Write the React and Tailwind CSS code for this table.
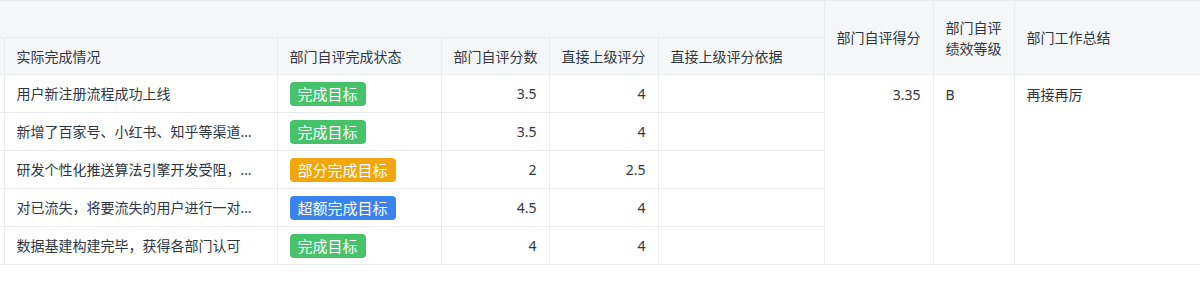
const rows = [
  { text: "用户新注册流程成功上线", status: "完成目标", tone: "green", self: "3.5", boss: "4" },
  { text: "新增了百家号、小红书、知乎等渠道的内容运营与用户引流工作", status: "完成目标", tone: "green", self: "3.5", boss: "4" },
  { text: "研发个性化推送算法引擎开发受阻，预计下季度继续推进", status: "部分完成目标", tone: "orange", self: "2", boss: "2.5" },
  { text: "对已流失，将要流失的用户进行一对一回访与召回", status: "超额完成目标", tone: "blue", self: "4.5", boss: "4" },
  { text: "数据基建构建完毕，获得各部门认可", status: "完成目标", tone: "green", self: "4", boss: "4" },
];

const toneClass = {
  green: "bg-[#46c26b]",
  orange: "bg-[#f0a60c]",
  blue: "bg-[#3a82ee]",
};

const Badge = ({ tone, children }) => (
  <span className={`inline-block align-middle h-6 px-2 rounded text-[15px] leading-6 text-white ${toneClass[tone]}`}>
    {children}
  </span>
);

const th = "border border-[#e9ebee] bg-[#f5f6f8] px-3 text-left font-normal align-middle";
const td = "border border-[#e9ebee] px-3 align-middle";

export default function App() {
  return (
    <div
      className="w-[1200px] h-[285px] overflow-hidden bg-white text-[14px] text-[#2f3641]"
      style={{ fontFamily: '"Noto Sans", "Noto Sans CJK SC", sans-serif' }}
    >
      <table className="table-fixed border-collapse w-[1314px] border-t border-[#e9ebee]">
        <colgroup>
          <col className="w-[4px]" />
          <col className="w-[273px]" />
          <col className="w-[164px]" />
          <col className="w-[108px]" />
          <col className="w-[109px]" />
          <col className="w-[166px]" />
          <col className="w-[109px]" />
          <col className="w-[81px]" />
          <col className="w-[300px]" />
        </colgroup>
        <thead>
          <tr className="h-[37px]">
            <th colSpan={6} className="border border-[#e9ebee] border-l-0 bg-[#f5f6f8]"></th>
            <th rowSpan={2} className={`${th} whitespace-nowrap`}>部门自评得分</th>
            <th rowSpan={2} className={`${th} leading-[21px]`}>部门自评绩效等级</th>
            <th rowSpan={2} className={`${th} whitespace-nowrap`}>部门工作总结</th>
          </tr>
          <tr className="h-[37px]">
            <th className="border border-[#e9ebee] border-l-0 bg-[#f5f6f8] p-0"></th>
            <th className={`${th} whitespace-nowrap`}>实际完成情况</th>
            <th className={`${th} whitespace-nowrap`}>部门自评完成状态</th>
            <th className={`${th} whitespace-nowrap`}>部门自评分数</th>
            <th className={`${th} whitespace-nowrap`}>直接上级评分</th>
            <th className={`${th} whitespace-nowrap`}>直接上级评分依据</th>
          </tr>
        </thead>
        <tbody>
          {rows.map((r, i) => (
            <tr key={i} className="h-[38px]">
              <td className="border border-[#e9ebee] border-l-0 p-0"></td>
              <td className={td}>
                <div className="truncate">{r.text}</div>
              </td>
              <td className={`${td} leading-none`}>
                <Badge tone={r.tone}>{r.status}</Badge>
              </td>
              <td className={`${td} text-right`}>{r.self}</td>
              <td className={`${td} text-right`}>{r.boss}</td>
              <td className={td}></td>
              {i === 0 && (
                <>
                  <td rowSpan={5} className="border border-[#e9ebee] px-3 pt-[9px] align-top text-right">3.35</td>
                  <td rowSpan={5} className="border border-[#e9ebee] px-3 pt-[9px] align-top">B</td>
                  <td rowSpan={5} className="border border-[#e9ebee] px-3 pt-[9px] align-top">再接再厉</td>
                </>
              )}
            </tr>
          ))}
        </tbody>
      </table>
    </div>
  );
}
